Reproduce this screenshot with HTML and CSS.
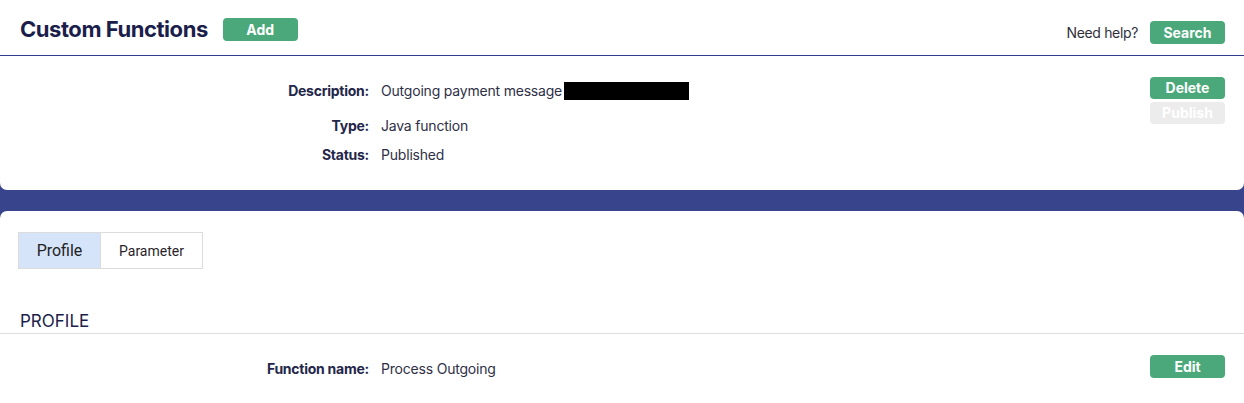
FILE: index.html
```html
<!DOCTYPE html>
<html>
<head>
<meta charset="utf-8">
<link rel="stylesheet" href="styles.css">
</head>
<body>
<header class="topbar">
  <div class="title-group">
    <h1 class="title">Custom Functions</h1>
    <button class="btn btn-green btn-add">Add</button>
  </div>
  <div class="help-group">
    <span class="help">Need help?</span>
    <button class="btn btn-green">Search</button>
  </div>
</header>
<section class="card card-top">
  <div class="details">
    <div class="row">
      <span class="label">Description:</span>
      <span class="value">Outgoing payment message <span class="redact"></span></span>
    </div>
    <div class="row row-type">
      <span class="label">Type:</span>
      <span class="value">Java function</span>
    </div>
    <div class="row row-status">
      <span class="label">Status:</span>
      <span class="value">Published</span>
    </div>
  </div>
  <div class="actions">
    <button class="btn btn-green btn-small">Delete</button>
    <button class="btn btn-disabled btn-small">Publish</button>
  </div>
</section>
<section class="card card-bottom">
  <div class="tabs">
    <div class="tab tab-active">Profile</div>
    <div class="tab">Parameter</div>
  </div>
  <h2 class="section-title">PROFILE</h2>
  <div class="profile-row">
    <div class="row">
      <span class="label">Function name:</span>
      <span class="value">Process Outgoing</span>
    </div>
    <button class="btn btn-green">Edit</button>
  </div>
</section>
</body>
</html>
```
FILE: styles.css
```css
html, body {
  margin: 0;
  padding: 0;
}
body {
  background: #38448c;
  font-family: Inter, "Liberation Sans", sans-serif;
  color: #2b2d42;
  height: 403px;
  overflow: hidden;
}
.topbar {
  background: #fff;
  border-bottom: 1px solid #2f3d8c;
  display: flex;
  justify-content: space-between;
  align-items: flex-start;
  padding: 0 19px 0 20px;
  box-sizing: border-box;
  height: 56px;
}
.title-group {
  display: flex;
  align-items: center;
  gap: 15px;
  padding-top: 18px;
}
.title {
  margin: 0;
  font-size: 22px;
  font-weight: 700;
  color: #1b1e4b;
  letter-spacing: -0.45px;
  line-height: 23px;
}
.help-group {
  display: flex;
  align-items: center;
  gap: 12px;
  padding-top: 21px;
}
.help {
  font-size: 14px;
  color: #2f2f3a;
  letter-spacing: -0.35px;
}
.btn {
  border: none;
  border-radius: 4px;
  width: 75px;
  height: 23px;
  font-family: Inter, "Liberation Sans", sans-serif;
  font-weight: 700;
  font-size: 14px;
  color: #fff;
  padding: 0;
  line-height: 23px;
}
.btn-green {
  background: #4aa87a;
}
.btn-disabled {
  background: #ececec;
  color: #fff;
}
.btn-small {
  height: 22px;
  line-height: 22px;
}
.card {
  background: #fff;
}
.card-top {
  height: 134px;
  border-radius: 0 0 7px 7px;
  display: flex;
  justify-content: space-between;
  padding: 0 19px 0 0;
  box-sizing: border-box;
}
.details {
  padding-top: 26px;
  display: flex;
  flex-direction: column;
}
.row {
  display: flex;
  align-items: center;
  font-size: 14px;
  line-height: 18px;
}
.row-type {
  margin-top: 17px;
}
.row-status {
  margin-top: 11px;
}
.label {
  width: 369px;
  text-align: right;
  font-weight: 700;
  color: #24264a;
  letter-spacing: -0.25px;
}
.value {
  margin-left: 12px;
  color: #2f3047;
  display: flex;
  align-items: center;
  letter-spacing: -0.2px;
}
.redact {
  display: inline-block;
  width: 125px;
  height: 18px;
  background: #000;
  margin-left: 2px;
}
.actions {
  display: flex;
  flex-direction: column;
  gap: 3px;
  padding-top: 21px;
}
.card-bottom {
  margin-top: 21px;
  border-radius: 7px;
  height: 200px;
  padding-top: 21px;
  box-sizing: border-box;
}
.tabs {
  display: flex;
  margin-left: 18px;
  width: max-content;
  border: 1px solid #dcdcdc;
  height: 37px;
  box-sizing: border-box;
}
.tab {
  font-family: Roboto, "Liberation Sans", sans-serif;
  display: flex;
  align-items: center;
  justify-content: center;
  font-size: 14px;
  color: #2a1f2a;
  width: 101px;
}
.tab-active {
  background: #d6e4fa;
  width: 81px;
  font-size: 16px;
  color: #222;
  border-right: 1px solid #dcdcdc;
}
.section-title {
  margin: 42px 0 0 20px;
  font-size: 17px;
  font-weight: 400;
  color: #1b1e4b;
  line-height: 20px;
  height: 22px;
}
.profile-row {
  border-top: 1px solid #dedede;
  display: flex;
  justify-content: space-between;
  align-items: center;
  padding: 20px 19px 0 0;
}
.profile-row .row {
  margin-top: 6px;
}
```
